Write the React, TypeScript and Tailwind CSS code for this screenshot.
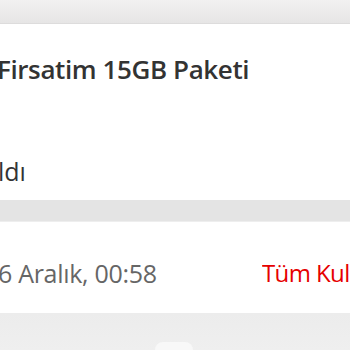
import React from 'react';

const App: React.FC = () => {
  return (
    <div className="w-[350px] h-[350px] overflow-hidden bg-[#ececec]" style={{ fontFamily: '"Open Sans", "Noto Sans", sans-serif' }}>
      <div className="h-[24px] bg-gradient-to-b from-[#f2f1f1] to-[#e6e5e5] border-b border-[#dddcdc]" />
      <div className="h-[176px] bg-white flex flex-col">
        <div className="mt-[29px] ml-[-3px] text-[26px] leading-[32px] tracking-[-0.4px] font-semibold text-[#333333] whitespace-nowrap">
          Firsatim 15GB Paketi
        </div>
        <div className="mt-[70px] ml-[-2px] text-[25px] leading-[32px] text-[#333333] whitespace-nowrap">
          ldı
        </div>
      </div>
      <div className="h-[22px] bg-[#e4e4e4] border-b border-[#eeeeee]" />
      <div className="h-[91px] bg-white flex items-start pt-[35px]">
        <span className="ml-[-2px] w-[264px] text-[25px] leading-[32px] tracking-[-0.3px] text-[#666666] whitespace-nowrap">6 Aralık, 00:58</span>
        <span className="flex-1 text-[24px] leading-[32px] tracking-[-0.6px] text-[#e60000] whitespace-nowrap overflow-hidden">Tüm Kullanım</span>
      </div>
      <div className="h-[37px] bg-gradient-to-b from-[#ececec] to-[#efefef] flex items-end justify-center">
        <div className="ml-[-2px] w-[38px] h-[8px] bg-[#f8f8f8] rounded-t-[8px]" />
      </div>
    </div>
  );
};

export default App;
